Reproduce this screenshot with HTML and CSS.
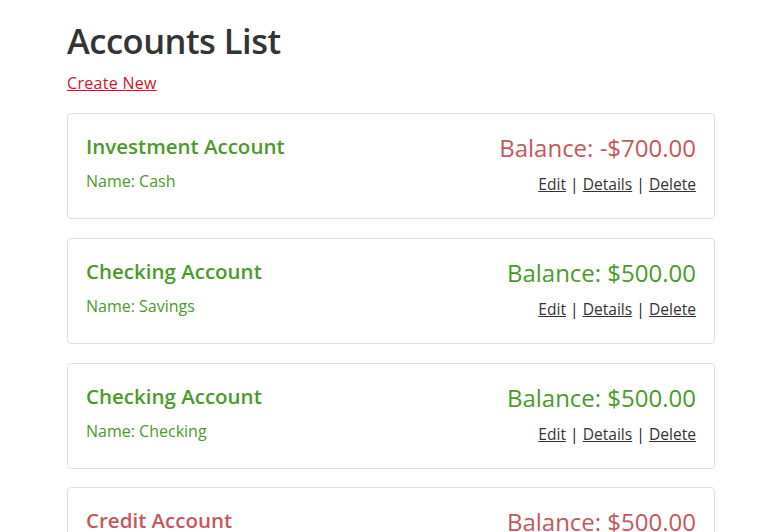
FILE: index.html
```html
<!DOCTYPE html>
<html lang="en">
<head>
<meta charset="utf-8">
<title>Accounts List</title>
<link rel="stylesheet" href="styles.css">
</head>
<body>
<div class="topbar"></div>
<main class="container">
  <h1 class="page-title">Accounts List</h1>
  <p class="create"><a href="#">Create New</a></p>
  <div class="card">
    <div class="info">
      <h4 class="type good">Investment Account</h4>
      <div class="name good">Name: Cash</div>
    </div>
    <div class="side">
      <h4 class="balance bad">Balance: -$700.00</h4>
      <div class="actions"><a href="#">Edit</a> | <a href="#">Details</a> | <a href="#">Delete</a></div>
    </div>
  </div>
  <div class="card">
    <div class="info">
      <h4 class="type good">Checking Account</h4>
      <div class="name good">Name: Savings</div>
    </div>
    <div class="side">
      <h4 class="balance good">Balance: $500.00</h4>
      <div class="actions"><a href="#">Edit</a> | <a href="#">Details</a> | <a href="#">Delete</a></div>
    </div>
  </div>
  <div class="card">
    <div class="info">
      <h4 class="type good">Checking Account</h4>
      <div class="name good">Name: Checking</div>
    </div>
    <div class="side">
      <h4 class="balance good">Balance: $500.00</h4>
      <div class="actions"><a href="#">Edit</a> | <a href="#">Details</a> | <a href="#">Delete</a></div>
    </div>
  </div>
  <div class="card">
    <div class="info">
      <h4 class="type bad">Credit Account</h4>
      <div class="name bad">Name: Card</div>
    </div>
    <div class="side">
      <h4 class="balance bad">Balance: $500.00</h4>
      <div class="actions"><a href="#">Edit</a> | <a href="#">Details</a> | <a href="#">Delete</a></div>
    </div>
  </div>
</main>
</body>
</html>
```
FILE: styles.css
```css
html, body {
  margin: 0;
  padding: 0;
  background: #fff;
  overflow: hidden;
}
body {
  font-family: "Open Sans", "Noto Sans", sans-serif;
  color: #212529;
  font-size: 16px;
}
.topbar {
  height: 1px;
  margin-top: -1px;
  box-shadow: 0 2px 14px rgba(0, 0, 0, 0.07);
}
.container {
  width: 648px;
  margin: 0 auto 0 67px;
}
.page-title {
  margin: 20px 0 0;
  font-size: 34.5px;
  font-weight: 600;
  line-height: 1.2;
  color: #343434;
  letter-spacing: -0.5px;
}
.create {
  margin: 10px 0 18px;
  font-size: 16px;
  line-height: 24px;
  letter-spacing: 0.3px;
}
.create a {
  color: #d01528;
}
.card {
  display: flex;
  justify-content: space-between;
  border: 1px solid #dfdfdf;
  border-radius: 4px;
  padding: 17px 18px 27px;
  margin-bottom: 18.7px;
  height: 60px;
}
.type {
  margin: 0;
  font-size: 20.5px;
  font-weight: 600;
  line-height: 30px;
}
.name {
  margin-top: 8px;
  font-size: 16px;
  line-height: 24px;
}
.side {
  text-align: right;
}
.balance {
  margin: 2px 0 0;
  font-size: 24px;
  font-weight: 500;
  line-height: 30px;
}
.actions {
  margin-top: 9px;
  font-size: 15.6px;
  line-height: 24px;
  color: #14144a;
}
.actions a {
  color: #333;
}
.good { color: #4c9a2a; }
.bad { color: #c6575c; }
```
